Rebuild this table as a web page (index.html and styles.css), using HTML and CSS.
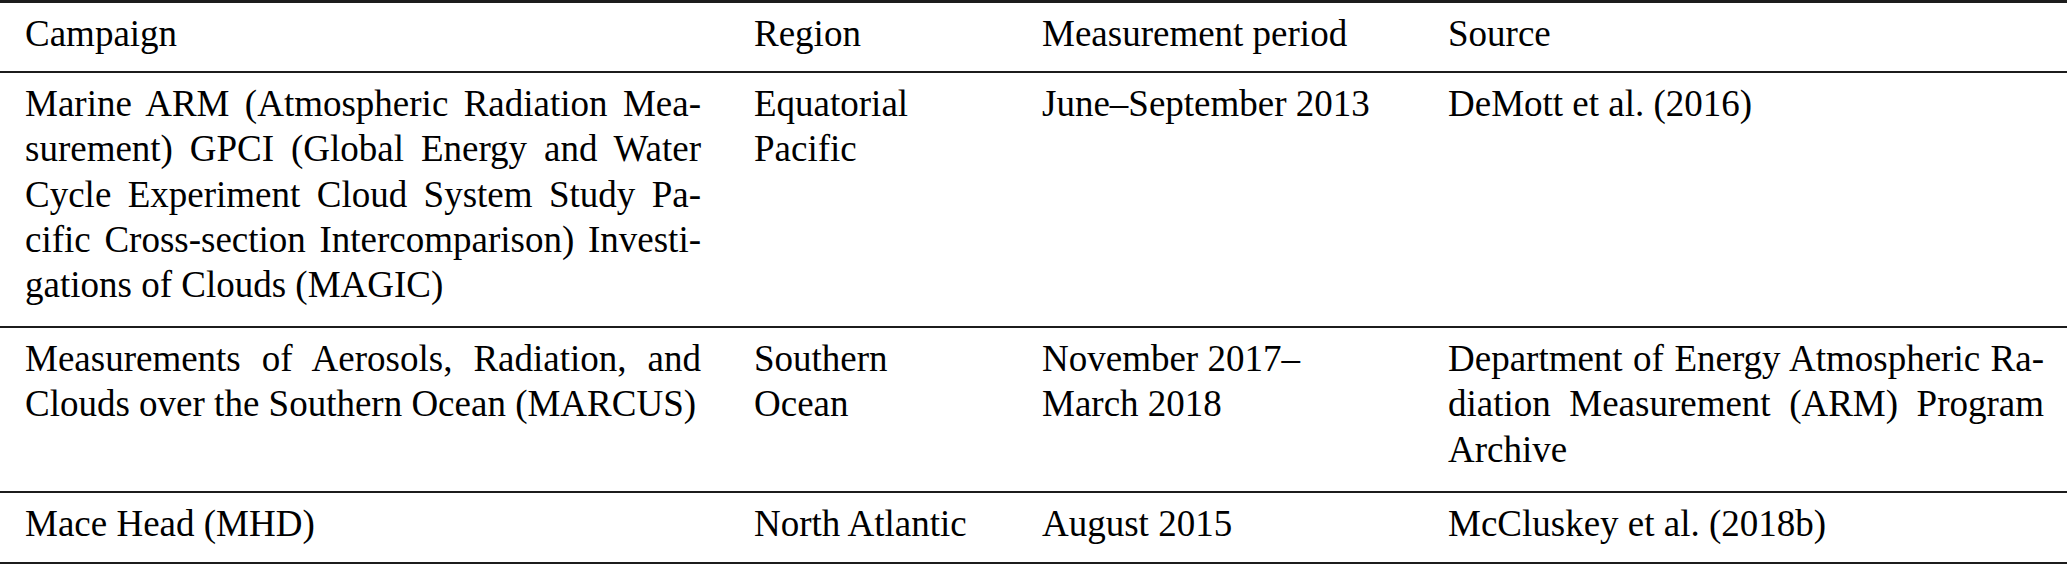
FILE: index.html
```html
<!DOCTYPE html>
<html lang="en">
<head>
    <meta charset="UTF-8">
    <meta name="viewport" content="width=device-width, initial-scale=1.0">
    <title>Campaigns</title>
    <link rel="stylesheet" href="styles.css">
</head>
<body>
    <table class="campaigns">
        <colgroup>
            <col class="c-campaign">
            <col class="c-region">
            <col class="c-period">
            <col class="c-source">
        </colgroup>
        <thead>
            <tr>
                <th>Campaign</th>
                <th>Region</th>
                <th>Measurement period</th>
                <th>Source</th>
            </tr>
        </thead>
        <tbody>
            <tr>
                <td class="just">Marine ARM (Atmospheric Radiation Mea&shy;surement) GPCI (Global Energy and Water Cycle Experiment Cloud System Study Pa&shy;cific Cross-section Intercomparison) Investi&shy;gations of Clouds (MAGIC)</td>
                <td>Equatorial Pacific</td>
                <td>June–September 2013</td>
                <td class="just">DeMott et al. (2016)</td>
            </tr>
            <tr>
                <td class="just">Measurements of Aerosols, Radiation, and Clouds over the Southern Ocean (MARCUS)</td>
                <td>Southern Ocean</td>
                <td>November 2017–<wbr>March 2018</td>
                <td class="just">Department of Energy Atmospheric Ra&shy;diation Measurement (ARM) Program Archive</td>
            </tr>
            <tr>
                <td class="just">Mace Head (MHD)</td>
                <td>North Atlantic</td>
                <td>August 2015</td>
                <td class="just">McCluskey et al. (2018b)</td>
            </tr>
        </tbody>
    </table>
</body>
</html>
```

FILE: styles.css
```css
*{
    box-sizing: border-box;
}
body{
    margin: 0;
    background: #fff;
}
.campaigns{
    width: 2067px;
    table-layout: fixed;
    border-collapse: separate;
    border-spacing: 0;
    font-family: "Liberation Serif", "Times New Roman", serif;
    font-size: 37px;
    line-height: 45.2px;
    color: #000;
}
.c-campaign{
    width: 727px;
}
.c-region{
    width: 288px;
}
.c-period{
    width: 406px;
}
.c-source{
    width: 646px;
}
th, td{
    text-align: left;
    vertical-align: top;
    font-weight: normal;
    padding: 8px 36px 19px 27px;
}
th{
    border-top: 3px solid #1c1c1c;
    border-bottom: 2px solid #1c1c1c;
    padding-bottom: 15px;
}
td{
    border-bottom: 2px solid #1c1c1c;
}
th:first-child, td:first-child{
    padding-left: 25px;
    padding-right: 26px;
}
th:nth-child(3), td:nth-child(3){
    padding-right: 26px;
}
th:last-child, td:last-child{
    padding-right: 23px;
}
tbody tr:last-child td{
    padding-bottom: 16px;
}
.just{
    text-align: justify;
}
```
